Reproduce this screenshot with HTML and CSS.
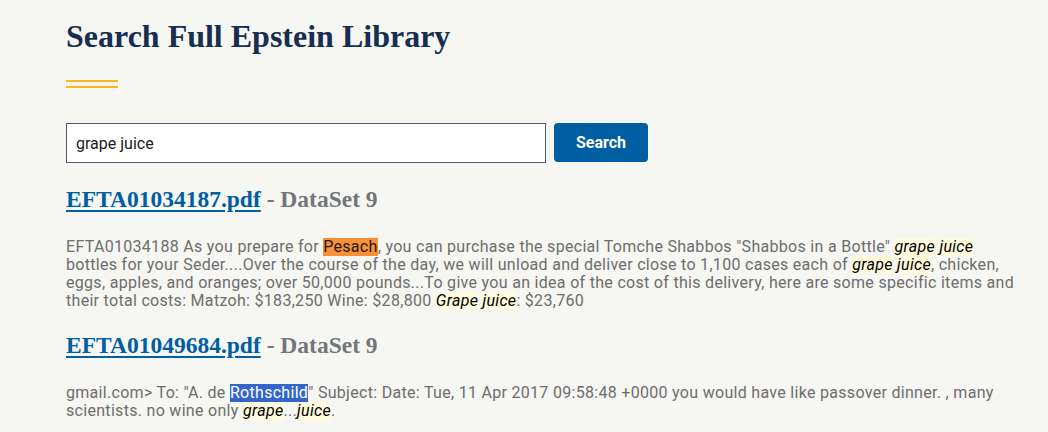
FILE: index.html
```html
<!DOCTYPE html>
<html lang="en">
<head>
<meta charset="utf-8">
<title>Search Full Epstein Library</title>
<link rel="stylesheet" href="styles.css">
</head>
<body>
<main class="page">
  <h1 class="title">Search Full Epstein Library</h1>
  <div class="rule"></div>
  <form class="search">
    <input class="search-input" type="text" value="grape juice">
    <button class="search-btn" type="button">Search</button>
  </form>
  <section class="results">
    <article class="result">
      <h2 class="result-title"><a href="#">EFTA01034187.pdf</a> <span class="dataset">- DataSet 9</span></h2>
      <p class="snippet">EFTA01034188 As you prepare for <mark class="hl-orange">Pesach</mark>, you can purchase the special Tomche Shabbos "Shabbos in a Bottle" <em class="hl">grape</em> <em class="hl">juice</em> bottles for your Seder....Over the course of the day, we will unload and deliver close to 1,100 cases each of <em class="hl">grape</em> <em class="hl">juice</em>, chicken, eggs, apples, and oranges; over 50,000 pounds...To give you an idea of the cost of this delivery, here are some specific items and their total costs: Matzoh: $183,250 Wine: $28,800 <em class="hl">Grape</em> <em class="hl">juice</em>: $23,760</p>
    </article>
    <article class="result">
      <h2 class="result-title"><a href="#">EFTA01049684.pdf</a> <span class="dataset">- DataSet 9</span></h2>
      <p class="snippet">gmail.com&gt; To: "A. de <mark class="hl-blue">Rothschild</mark>" Subject: Date: Tue, 11 Apr 2017 09:58:48 +0000 you would have like passover dinner. , many scientists. no wine only <em class="hl">grape</em>...<em class="hl">juice</em>.</p>
    </article>
  </section>
</main>
</body>
</html>
```

FILE: styles.css
```css
html, body {
  margin: 0;
  padding: 0;
  background: #f6f6f2;
}

.page {
  padding: 14px 32px 0 66px;
  width: 950px;
  font-family: "Roboto", "Liberation Sans", sans-serif;
}

.title {
  margin: 0;
  font-family: "Liberation Serif", "DejaVu Serif", serif;
  font-weight: 700;
  font-size: 32px;
  line-height: 44px;
  color: #162e51;
}

.rule {
  margin-top: 22px;
  width: 52px;
  height: 8px;
  border-top: 2px solid #fdb81e;
  border-bottom: 2px solid #fdb81e;
  box-sizing: border-box;
}

.search {
  display: flex;
  gap: 8px;
  margin-top: 35px;
}

.search-input {
  width: 480px;
  height: 40px;
  box-sizing: border-box;
  margin: 0;
  padding: 0 9px;
  border: 1px solid #565c65;
  background: #fff;
  font-family: "Roboto", "Liberation Sans", sans-serif;
  font-size: 16px;
  color: #1b1b1b;
}

.search-btn {
  width: 94px;
  height: 39px;
  margin: 0;
  border: 0;
  border-radius: 4px;
  background: #005ea2;
  color: #fff;
  font-family: "Roboto", "Liberation Sans", sans-serif;
  font-weight: 700;
  font-size: 16px;
}

.results {
  margin-top: 20px;
}

.result-title {
  margin: 0;
  font-family: "Liberation Serif", "DejaVu Serif", serif;
  font-weight: 700;
  font-size: 23.5px;
  line-height: 32px;
  color: #71767a;
}

.result-title a {
  color: #005ea2;
  text-decoration: underline;
  text-decoration-thickness: 2px;
  text-underline-offset: 3px;
}

.dataset {
  color: #71767a;
}

.snippet {
  margin: 23px 0 19px;
  font-size: 16px;
  line-height: 18px;
  letter-spacing: 0.3px;
  color: #6d6d6d;
}

.hl,
.hl-orange,
.hl-blue {
  display: inline-block;
  height: 18px;
  line-height: 18px;
  vertical-align: top;
}

.hl {
  font-style: italic;
  color: #000;
  background: #fffbdd;
}

.hl-orange {
  background: #fa8f33;
  color: #1b1b1b;
}

.hl-blue {
  background: #3266cc;
  color: #fff;
}
```
